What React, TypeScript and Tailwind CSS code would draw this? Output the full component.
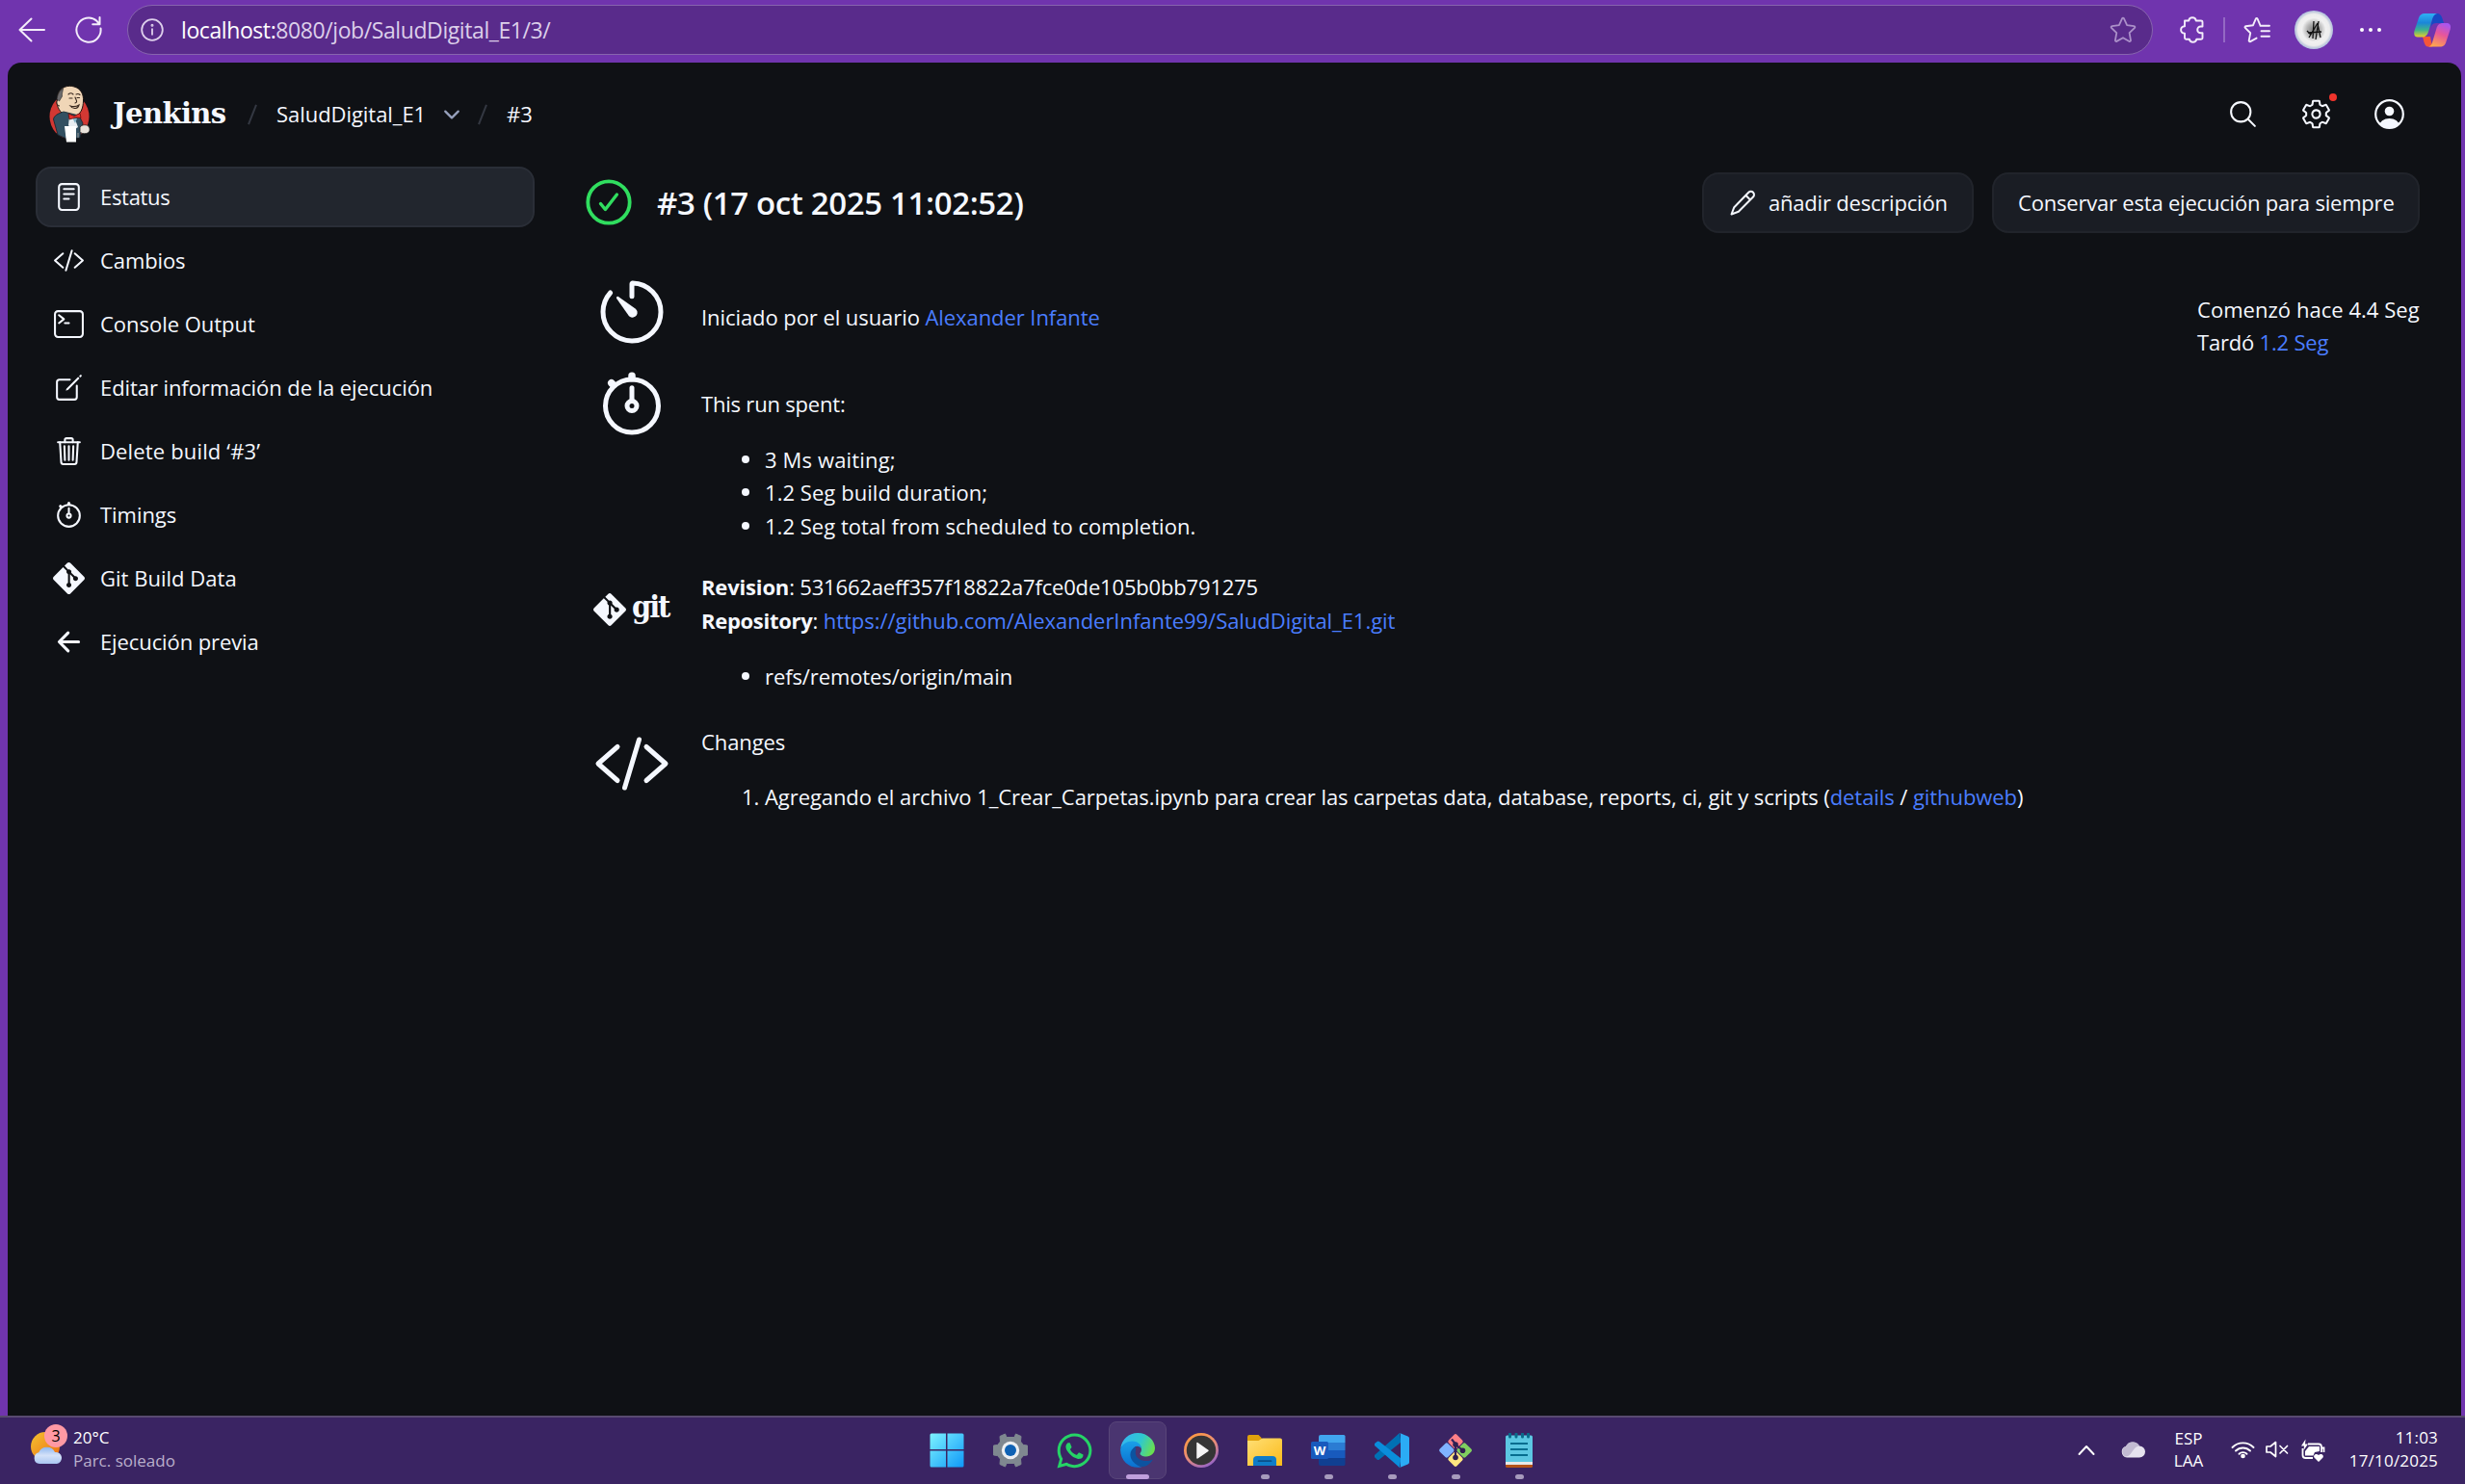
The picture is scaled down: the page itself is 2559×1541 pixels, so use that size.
import React from "react";
import {
  IoArrowBackOutline,
  IoChevronDownOutline,
  IoCodeSlashOutline,
  IoCreateOutline,
  IoReaderOutline,
  IoSearchOutline,
  IoSettingsOutline,
  IoStopwatchOutline,
  IoTerminalOutline,
  IoTimerOutline,
  IoTrashOutline,
} from "react-icons/io5";
import { SiGit } from "react-icons/si";
import { FaWhatsapp } from "react-icons/fa";

const PuzzleIcon = () => (
  <svg width="26" height="28" viewBox="0 0 26 28" fill="none" stroke="#f3ecfa" strokeWidth="1.9" strokeLinejoin="round">
    <path d="M5 4.500h4.200c.3-2 1.900-3.300 3.800-3.300s3.500 1.300 3.800 3.300h5.200a1.500 1.500 0 0 1 1.500 1.500v4.500h-1.900a3.300 3.300 0 0 0 0 6.800h1.900v5a1.500 1.500 0 0 1-1.500 1.500h-4.700c-.4 1.800-1.900 3-3.700 3s-3.300-1.200-3.700-3H6.500A1.500 1.500 0 0 1 5 22.300v-4.700c-2.200-.2-3.900-1.700-3.900-3.700S2.800 10.400 5 10.200z" />
  </svg>
);

const Star = () => (
  <svg width="28" height="28" viewBox="0 0 28 28" fill="none" stroke="#ab90c9" strokeWidth="1.8" strokeLinejoin="round">
    <path d="M13.100 2.200a1 1 0 0 1 1.800 0l3.200 6.900 7.400 1a1 1 0 0 1 .6 1.700l-5.500 5.300 1.400 7.800a1 1 0 0 1-1.500 1L14 22.200l-6.600 3.700a1 1 0 0 1-1.500-1l1.400-7.800L1.900 11.800a1 1 0 0 1 .6-1.700l7.400-1z" />
  </svg>
);

const FavList = () => (
  <svg width="28" height="28" viewBox="0 0 28 28" fill="none" stroke="#f3ecfa" strokeWidth="1.9" strokeLinejoin="round" strokeLinecap="round">
    <path d="M17.500 9.500 14.600 2.600a1 1 0 0 0-1.800 0L10 9.200l-7.700 1a1 1 0 0 0-.5 1.700l5.400 5.300-1.500 7.900a1 1 0 0 0 1.500 1l6.400-3.500M17.500 9.700H27M18.500 15.200H27M18.500 20.700H27" />
  </svg>
);

const Avatar = () => (
  <svg width="40" height="40" viewBox="0 0 40 40">
    <defs>
      <radialGradient id="av">
        <stop offset="0" stopColor="#777" />
        <stop offset=".35" stopColor="#b5b5b5" />
        <stop offset=".62" stopColor="#f1f1f1" />
        <stop offset=".82" stopColor="#ededed" />
        <stop offset=".92" stopColor="#c6cede" />
        <stop offset="1" stopColor="#b3c2e0" />
      </radialGradient>
    </defs>
    <circle cx="20" cy="20" r="20" fill="url(#av)" />
    <path d="M13 21l4 4M15 28l9-15M20 11l-1 18M25 11l-3 19M14 23l14-1M24 14l3 14" stroke="#111" strokeWidth="1.300" fill="none" />
  </svg>
);

const Copilot = () => (
  <svg width="38" height="36" viewBox="0 0 38 36">
    <defs>
      <linearGradient id="cp1" x1="0" y1="0" x2="0" y2="1">
        <stop offset="0" stopColor="#2fb0f5" />
        <stop offset=".4" stopColor="#1b86d8" />
        <stop offset=".7" stopColor="#3fb38c" />
        <stop offset="1" stopColor="#e8cf2a" />
      </linearGradient>
      <linearGradient id="cp2" x1=".7" y1="0" x2=".3" y2="1">
        <stop offset="0" stopColor="#a855f0" />
        <stop offset=".45" stopColor="#e8569a" />
        <stop offset="1" stopColor="#ffa64d" />
      </linearGradient>
    </defs>
    <path d="M20 1h4c3 0 4.500 2 5.400 5l1.600 5h-8c-4 0-5 3-6 6z" fill="#1848c4" />
    <path d="M9 25h8l2 10.500h-4c-2.500 0-3.800-2-4.600-5z" fill="#f4553a" />
    <path d="M11 1h13c-2.500.5-4 2.500-5 6l-4 13c-1 3.500-3 5.500-7 5.500H4C.5 25.500-.4 23 .5 19L5 5.500C6 2.500 8 1 11 1z" fill="url(#cp1)" />
    <path d="M27 35.500H15c2.500-.5 3.600-2.500 4.500-6l3.800-12.500c1-4 3-6 7-6h4c3.500 0 4.300 3 3.400 6.500L33.500 30c-1 4-3 5.500-6.500 5.500z" fill="url(#cp2)" />
  </svg>
);

const Butler = () => (
  <svg width="42" height="60" viewBox="0 0 42 60">
    <ellipse cx="21" cy="33" rx="20.500" ry="23" fill="#d33833" />
    <path d="M9 10C12 2 20 0 26 2c7 2 10 8 9.500 15-.3 7-2 12-7 15H18c-5-1-9-7-10-13z" fill="#f0d6b7" stroke="#1c1512" strokeWidth="1" />
    <path d="M8 15c1-6 3-9 6.500-11-.5 4-1.500 5-1 8l-3 5z" fill="#6d6b6d" stroke="#222" strokeWidth=".6" />
    <path d="M9 16c-2 1-1 6 2 6" fill="#f0d6b7" stroke="#1c1512" strokeWidth=".9" />
    <path d="M20 10c2-2 4-1 5 0M28 10c2-1 3-.5 4 .5M21 14h3M29 13.500h2.500M27 13c1 3 3 5 0 6M22 22c3 1 6 1 9-1-1 4-6 5-9 1z" fill="none" stroke="#3a2a20" strokeWidth="1.100" strokeLinecap="round" />
    <path d="M15 28c-6 2-10 4-10.500 8L9 52l9 4 14-1 3-15-4-8-8-2z" fill="#335061" stroke="#14222b" strokeWidth=".8" />
    <path d="M21 33l6 3 3 8-6 4-4-6z" fill="#e9eef2" />
    <path d="M24 34l3 6 2-5z" fill="#81b0c4" />
    <path d="M20 30l6 2.500 6-3 1 5-5-.5-7 2z" fill="#e8322d" stroke="#5b0f0d" strokeWidth=".8" />
    <path d="M16 43l12 0 0 16.500-10 0z" fill="#fff" />
    <path d="M32 44c2-3 8-3 9.500 0s0 6-3 6.500-6 0-6.500-2z" fill="#e9e2da" stroke="#222" strokeWidth=".8" />
    <path d="M30 50l0 5" stroke="#999" strokeWidth="1" />
  </svg>
);

const Slash = () => (
  <svg width="10" height="22" viewBox="0 0 10 22">
    <path d="M9 .8 1 21.200" stroke="#343842" strokeWidth="2" />
  </svg>
);

const PencilIcon = () => (
  <svg width="28" height="28" viewBox="0 0 28 28" fill="none" stroke="#f5f8ff" strokeWidth="2" strokeLinejoin="round" strokeLinecap="round">
    <path d="M20.300 2.800a3.300 3.300 0 0 1 4.700 4.700L9.800 22.700 2.500 25.500l2.800-7.300zM17.300 5.800l4.700 4.700" />
  </svg>
);

const UserIcon = () => (
  <svg width="31" height="31" viewBox="0 0 31 31">
    <clipPath id="uc"><circle cx="15.500" cy="15.500" r="14.500" /></clipPath>
    <circle cx="15.500" cy="15.500" r="14.300" fill="none" stroke="#f5f8ff" strokeWidth="2.200" />
    <circle cx="15.500" cy="12.500" r="4.800" fill="#f5f8ff" />
    <ellipse cx="15.500" cy="28" rx="10.500" ry="8" fill="#f5f8ff" clipPath="url(#uc)" />
  </svg>
);

const nav: { label: string; icon: React.ReactNode; cls: string }[] = [
  { label: "Estatus", icon: <IoReaderOutline size={33} />, cls: "tracking-[-0.3px]" },
  { label: "Cambios", icon: <IoCodeSlashOutline size={33} />, cls: "tracking-[-0.1px]" },
  { label: "Console Output", icon: <IoTerminalOutline size={33} />, cls: "tracking-[-0.03px]" },
  { label: "Editar información de la ejecución", icon: <IoCreateOutline size={33} />, cls: "tracking-[-0.08px]" },
  { label: "Delete build ‘#3’", icon: <IoTrashOutline size={33} />, cls: "tracking-[0.15px]" },
  { label: "Timings", icon: <IoStopwatchOutline size={33} />, cls: "tracking-[-0.05px]" },
  { label: "Git Build Data", icon: <SiGit size={33} />, cls: "tracking-[0.02px]" },
  { label: "Ejecución previa", icon: <IoArrowBackOutline size={33} />, cls: "tracking-[-0.1px]" },
];

function BrowserBar() {
  return (
    <div className="flex h-[65px] shrink-0 items-start">
      <div className="flex h-[61px] items-center pl-[19px]">
        <svg width="28" height="26" viewBox="0 0 28 26" fill="none" stroke="#f3ecfa" strokeWidth="2" strokeLinecap="round" strokeLinejoin="round">
          <path d="M27 13H1.500M13.500 1.500 1.500 13l12 11.500" />
        </svg>
        <svg className="ml-[31px]" width="28" height="28" viewBox="0 0 28 28" fill="none" stroke="#f3ecfa" strokeWidth="2" strokeLinecap="round" strokeLinejoin="round">
          <path d="M26.500 12.500A12.600 12.600 0 1 1 22.500 4.800l2.700 3.200M25.500 1v7.300h-7.300" />
        </svg>
      </div>
      <div className="ml-[26px] mt-[5px] flex h-[52px] w-[2103px] items-center rounded-full border-[1.500px] border-[#8764ae] bg-[#592b8b] pl-[13px] pr-[16px]">
        <svg width="24" height="24" viewBox="0 0 24 24" fill="none" stroke="#ded0ec" strokeWidth="1.800">
          <circle cx="12" cy="12" r="10.800" />
          <path d="M12 10.500v7" />
          <circle cx="12" cy="7.300" r=".6" />
        </svg>
        <span className="ml-[18px] text-[23px] leading-[34px] tracking-[-0.41px] text-[#dccfea]">
          <span className="text-white">localhost:</span>8080/job/SaludDigital_E1/3/
        </span>
        <span className="ml-auto"><Star /></span>
      </div>
      <div className="flex h-[62px] items-center pl-[28px]">
        <PuzzleIcon />
        <div className="ml-[19px] h-[26px] w-[2px] bg-[#9468c4]" />
        <div className="ml-[19px]"><FavList /></div>
        <div className="ml-[25px]"><Avatar /></div>
        <div className="ml-[28px] flex gap-[5px]">
          <i className="size-[4px] rounded-full bg-white" />
          <i className="size-[4px] rounded-full bg-white" />
          <i className="size-[4px] rounded-full bg-white" />
        </div>
        <div className="ml-[34px]"><Copilot /></div>
      </div>
    </div>
  );
}

function Header() {
  return (
    <div className="flex h-[108px] items-center pb-[2px] pl-[43px] pr-[59px]">
      <Butler />
      <span className="ml-[24px] w-[120px] whitespace-nowrap font-['DejaVu_Serif'] text-[29px] font-bold leading-[36px] tracking-[-0.6px]">Jenkins</span>
      <div className="ml-[20px] flex items-center pt-px">
        <Slash />
        <span className="ml-[20px] w-[155px] whitespace-nowrap tracking-[-0.05px]">SaludDigital_E1</span>
        <IoChevronDownOutline size={24} className="ml-[15px] text-[#97a1bd]" />
        <span className="ml-[15px]"><Slash /></span>
        <span className="ml-[20px]">#3</span>
      </div>
      <div className="ml-auto flex items-center">
        <IoSearchOutline size={33} className="mr-[43px]" />
        <div className="relative mr-[44px]">
          <IoSettingsOutline size={33} />
          <i className="absolute -top-[5px] left-[30px] size-[8px] rounded-full bg-[#f0342c]" />
        </div>
        <UserIcon />
      </div>
    </div>
  );
}

function Sidebar() {
  return (
    <div className="flex w-[518px] shrink-0 flex-col gap-[3px]">
      {nav.map((n, i) => (
        <div
          key={n.label}
          className={
            "flex h-[63px] items-center rounded-[16px] border-2 pl-[16px] " +
            (i === 0 ? "border-[#2a2e37] bg-[#22262e]" : "border-transparent")
          }
        >
          {n.icon}
          <span className={"ml-[16px] " + n.cls}>{n.label}</span>
        </div>
      ))}
    </div>
  );
}

const Row = ({ icon, children, className }: { icon: React.ReactNode; children: React.ReactNode; className: string }) => (
  <div className={"flex items-start " + className}>
    <div className="flex w-[120px] shrink-0 items-center pl-[8px]">{icon}</div>
    <div className="whitespace-nowrap">{children}</div>
  </div>
);

const Bullet = ({ children, mark }: { children: React.ReactNode; mark?: string }) => (
  <div className="flex items-center pl-[42px]">
    {mark ? <span className="w-[24px]">{mark}</span> : <i className="mr-[16px] size-[8px] rounded-full bg-[#f5f8ff]" />}
    <span>{children}</span>
  </div>
);

function Main() {
  return (
    <div className="ml-[53px] flex w-[1904px] flex-col">
      <div className="mt-[6px] flex h-[63px] items-center">
        <svg width="48" height="48" viewBox="0 0 48 48" fill="none" stroke="#30de5f" strokeWidth="3.800" strokeLinecap="round" strokeLinejoin="round" className="-mt-[1px]">
          <circle cx="24" cy="24" r="21.700" />
          <path d="M15.500 25.500l4.900 6 12-15.500" strokeWidth="3.400" />
        </svg>
        <h1 className="ml-[26px] text-[33px] font-semibold leading-[44px] tracking-[-0.36px]">#3 (17 oct 2025 11:02:52)</h1>
        <div className="ml-auto flex h-[63px] w-[282px] items-center rounded-[17px] border-2 border-[#21242b] bg-[#1a1d24] pl-[26px]">
          <PencilIcon />
          <span className="ml-[13px] whitespace-nowrap tracking-[-0.2px]">añadir descripción</span>
        </div>
        <div className="ml-[19px] flex h-[63px] w-[444px] items-center rounded-[17px] border-2 border-[#21242b] bg-[#1a1d24] pl-[25px]">
          <span className="whitespace-nowrap tracking-[-0.2px]">Conservar esta ejecución para siempre</span>
        </div>
      </div>
      <div className="flex justify-between">
        <div className="flex flex-col pt-[42px]">
          <Row className="h-[95px]" icon={<IoTimerOutline size={80} />}>
            <div className="pt-[28px] tracking-[-0.07px]">
              Iniciado por el usuario <span className="text-[#4a7dff]">Alexander Infante</span>
            </div>
          </Row>
          <Row className="h-[213px]" icon={<IoStopwatchOutline size={80} />}>
            <div className="pt-[23px] tracking-[-0.2px]">This run spent:</div>
            <div className="pt-[23px]">
              <Bullet><span className="tracking-[0.15px]">3 Ms waiting;</span></Bullet>
              <Bullet><span className="tracking-[0.05px]">1.2 Seg build duration;</span></Bullet>
              <Bullet><span className="tracking-[0.03px]">1.2 Seg total from scheduled to completion.</span></Bullet>
            </div>
          </Row>
          <Row
            className="h-[161px]"
            icon={
              <div className="flex items-center pt-[24px]">
                <SiGit size={34} />
                <span className="ml-[6px] -mt-[7px] font-['DejaVu_Serif'] text-[32px] font-bold leading-[34px] tracking-[-2px] [font-stretch:condensed]">git</span>
              </div>
            }
          >
            <div className="tracking-[-0.17px]"><b>Revision</b>: 531662aeff357f18822a7fce0de105b0bb791275</div>
            <div className="tracking-[-0.04px]">
              <b className="tracking-[-0.3px]">Repository</b>: <span className="text-[#4a7dff]">https://github.com/AlexanderInfante99/SaludDigital_E1.git</span>
            </div>
            <div className="pt-[24px] tracking-[-0.1px]"><Bullet>refs/remotes/origin/main</Bullet></div>
          </Row>
          <Row className="" icon={<IoCodeSlashOutline size={80} />}>
            <div className="tracking-[-0.1px]">Changes</div>
            <div className="pt-[22px] tracking-[-0.07px]">
              <Bullet mark="1.">
                Agregando el archivo 1_Crear_Carpetas.ipynb para crear las carpetas data, database, reports, ci, git y scripts (
                <span className="text-[#4a7dff]">details</span> / <span className="text-[#4a7dff]">githubweb</span>)
              </Bullet>
            </div>
          </Row>
        </div>
        <div className="w-[231px] whitespace-nowrap pt-[62px]">
          <div className="tracking-[0.04px]">Comenzó hace 4.4 Seg</div>
          <div className="-mt-px tracking-[-0.2px]">Tardó <span className="text-[#4a7dff]">1.2 Seg</span></div>
        </div>
      </div>
    </div>
  );
}

const WindowsLogo = () => (
  <svg width="36" height="36" viewBox="0 0 36 36">
    <defs>
      <linearGradient id="w1" x1="0" y1="0" x2="1" y2="1">
        <stop offset="0" stopColor="#7df3ff" />
        <stop offset="1" stopColor="#0f98f8" />
      </linearGradient>
    </defs>
    <path fill="url(#w1)" d="M2 .5h15v16.500H.5V2A1.500 1.500 0 0 1 2 .5zM18.500.5H34A1.500 1.500 0 0 1 35.500 2v15h-17zM.5 18.500H17v17H2A1.500 1.500 0 0 1 .5 34zM18.500 18.500h17V34a1.500 1.500 0 0 1-1.500 1.500H18.500z" />
  </svg>
);

const SettingsApp = () => (
  <svg width="36" height="36" viewBox="0 0 36 36">
    <path d="M12.500 1 14 4.500h8L23.500 1l5.500 2.500-.5 5.500 3 3.500 4 .5a16 16 0 0 1 0 10l-4 .5-3 3.500.5 5.500-5.500 2.500L22 31.500h-8L12.500 35 7 32.500l.5-5.500-3-3.500-4-.5a16 16 0 0 1 0-10l4-.5 3-3.500L7 3.500z" fill="#7f8890" stroke="#7f8890" strokeLinejoin="round" />
    <circle cx="18" cy="18" r="9.200" fill="#eceff2" />
    <circle cx="18" cy="18" r="6" fill="#0f62b4" />
  </svg>
);

const EdgeApp = () => (
  <svg width="36" height="36" viewBox="0 0 36 36">
    <defs>
      <linearGradient id="e1" x1="0" y1=".3" x2="1" y2=".6">
        <stop offset="0" stopColor="#35b5f1" />
        <stop offset=".55" stopColor="#2fc8cf" />
        <stop offset="1" stopColor="#6be04c" />
      </linearGradient>
      <linearGradient id="e2" x1="0" y1="0" x2="0" y2="1">
        <stop offset="0" stopColor="#1aa0e8" />
        <stop offset="1" stopColor="#0a6fd0" />
      </linearGradient>
    </defs>
    <path d="M.3 16C1.500 6.500 9 0 18 0c10.500 0 18 8 18 15.500 0 5.500-4 9-9 9-4 0-6.500-1.500-6.500-3 0-1 1.500-1.500 1.500-4.500 0-4-4-7-8.500-7C7.500 10 2 12.500.3 16z" fill="url(#e1)" />
    <path d="M.1 17C1.500 11.500 7 8.500 12.500 8.500c5 0 9.500 3.500 9.500 8-1.500-3-5-3.500-7-2-3.500 3-4 9-1 14 2 3.500 5 6 8.500 6.800C12 38 0 30.500.1 17z" fill="url(#e2)" />
    <path d="M16 14.200c-6 2.500-7.500 9.800-3 15.300 4.500 6 12.500 7 16.500 3 2-1.500 3.500-3.500 4.300-5-7 3.500-17.500 1-18-6.500-.1-3 .7-5.300.2-6.800z" fill="#0c53a0" />
  </svg>
);

const MediaApp = () => (
  <svg width="36" height="36" viewBox="0 0 36 36">
    <defs>
      <linearGradient id="m1" x1=".2" y1="0" x2=".8" y2="1">
        <stop offset="0" stopColor="#ff9a3d" />
        <stop offset=".5" stopColor="#e98d78" />
        <stop offset="1" stopColor="#8a5fd0" />
      </linearGradient>
    </defs>
    <circle cx="18" cy="18" r="18" fill="url(#m1)" />
    <circle cx="18" cy="18" r="15.200" fill="#353535" />
    <path d="M14 10.500v15.500L25 18.300z" fill="#f5f5f5" stroke="#f5f5f5" strokeWidth="1.500" strokeLinejoin="round" />
  </svg>
);

const FolderApp = () => (
  <svg width="36" height="36" viewBox="0 0 36 36">
    <defs>
      <linearGradient id="f1" x1="0" y1="0" x2="1" y2="1">
        <stop offset="0" stopColor="#ffdf76" />
        <stop offset="1" stopColor="#fbbb1a" />
      </linearGradient>
    </defs>
    <path d="M0 4a2 2 0 0 1 2-2h9.500L15 5.500V12H0z" fill="#e0a10c" />
    <path d="M0 8h11.500l4-2.500H34a2 2 0 0 1 2 2V34H0z" fill="url(#f1)" />
    <path d="M6 34v-6a4 4 0 0 1 4-4h16a4 4 0 0 1 4 4v6z" fill="#0f7cc8" />
    <path d="M11.500 29.200h13" stroke="#0a4f88" strokeWidth="1.800" strokeLinecap="round" />
  </svg>
);

const WordApp = () => (
  <div className="relative h-[36px] w-[36px]">
    <svg width="36" height="36" viewBox="0 0 36 36">
      <path d="M8 10V4a2 2 0 0 1 2-2h24a1.500 1.500 0 0 1 1.500 1.500V10z" fill="#41a5ee" />
      <path d="M8 10h27.500v8H8z" fill="#2b7cd3" />
      <path d="M8 18h27.500v8H8z" fill="#185abd" />
      <path d="M8 26h27.500v6.500A1.500 1.500 0 0 1 34 34H10a2 2 0 0 1-2-2z" fill="#103f91" />
      <rect x="0" y="9" width="18" height="18" rx="1.500" fill="#185abd" />
    </svg>
    <span className="absolute left-0 top-[9px] w-[18px] text-center text-[13px] font-bold leading-[18px] text-white">W</span>
  </div>
);

const CodeApp = () => (
  <svg width="36" height="36" viewBox="0 0 36 36">
    <path d="M.5 22.500 26 0l1.500 9.500L5 27.500a2 2 0 0 1-2.500 0L.7 25.800a2 2 0 0 1-.2-3.300z" fill="#0070b4" />
    <path d="M.5 13.500 26 36l1.500-9.500L5 9a2 2 0 0 0-2.500 0L.7 10.500a2 2 0 0 0-.2 3z" fill="#0a8ddb" />
    <path d="M26 0l8.500 3.500A2.500 2.500 0 0 1 36 6v24a2.500 2.500 0 0 1-1.500 2.500L26 36c1-.5 1-1.500 1-2.500V3c0-1.200 0-2.500-1-3z" fill="#2bacf5" />
  </svg>
);

const GitBashApp = () => (
  <svg width="36" height="36" viewBox="0 0 36 36">
    <g transform="rotate(45 18 18)">
      <rect x="5.500" y="5.500" width="12" height="12" rx="2" fill="#ff7f86" />
      <rect x="18.500" y="5.500" width="12" height="12" rx="2" fill="#80d05f" />
      <rect x="5.500" y="18.500" width="12" height="12" rx="2" fill="#80b3ff" />
      <rect x="18.500" y="18.500" width="12" height="12" rx="2" fill="#ffe680" />
    </g>
    <path d="M14 6.500l4 5v14M18 12l7.500 6" stroke="#34225a" strokeWidth="2.200" fill="none" />
    <circle cx="18" cy="12" r="2.800" fill="#2f2050" />
    <circle cx="25.500" cy="18.200" r="2.800" fill="#2f2050" />
    <circle cx="18" cy="25.500" r="2.800" fill="#2f2050" />
  </svg>
);

const NotepadApp = () => (
  <svg width="36" height="36" viewBox="0 0 36 36">
    <path d="M4 30h28v4.500a1.500 1.500 0 0 1-1.500 1.500h-25A1.500 1.500 0 0 1 4 34.500z" fill="#b45318" />
    <path d="M4 29h28v4H4z" fill="#e8e8e8" />
    <path d="M4 4a1.500 1.500 0 0 1 1.500-1.500h25A1.500 1.500 0 0 1 32 4v26H4z" fill="#5cc7e2" />
    <path d="M9 11h18M9 17h18M9 23h18" stroke="#066d8f" strokeWidth="1.800" />
    <path d="M8.500 1v3M15 1v3M21.500 1v3M27.500 1v3" stroke="#0a6c8c" strokeWidth="3" strokeLinecap="round" />
  </svg>
);

const apps: { icon: React.ReactNode; run?: boolean; active?: boolean }[] = [
  { icon: <WindowsLogo /> },
  { icon: <SettingsApp /> },
  { icon: <FaWhatsapp size={41} color="#25d366" /> },
  { icon: <EdgeApp />, active: true },
  { icon: <MediaApp /> },
  { icon: <FolderApp />, run: true },
  { icon: <WordApp />, run: true },
  { icon: <CodeApp />, run: true },
  { icon: <GitBashApp />, run: true },
  { icon: <NotepadApp />, run: true },
];

function Taskbar() {
  return (
    <div className="flex h-[71px] shrink-0 border-t-2 border-[#584a70] bg-[#3a2463]">
      <div className="flex w-[950px] items-start pl-[32px]">
        <div className="relative mt-[6px] h-[48px] w-[44px]">
          <svg width="34" height="38" viewBox="0 0 34 38" className="mt-[5px]">
            <defs>
              <linearGradient id="sun" x1="0" y1="0" x2="1" y2="1">
                <stop offset="0" stopColor="#f3c330" />
                <stop offset="1" stopColor="#ee6a12" />
              </linearGradient>
              <linearGradient id="cl" x1="0" y1="0" x2="0" y2="1">
                <stop offset="0" stopColor="#8db6ef" />
                <stop offset=".5" stopColor="#d5e2f8" />
                <stop offset="1" stopColor="#a9c6f2" />
              </linearGradient>
            </defs>
            <circle cx="15" cy="19" r="15" fill="url(#sun)" />
            <path d="M9 37a6 6 0 0 1-.8-11.800A9 8.500 0 0 1 25 25a6 6 0 0 1 2 12z" fill="url(#cl)" />
          </svg>
          <span className="absolute left-[14px] top-[1px] size-[24px] rounded-full bg-[#ff99a4] text-center text-[16px] leading-[24px] text-black">3</span>
        </div>
        <div className="pt-[9px] text-[17px] leading-[24px]">
          <div className="text-white">20°C</div>
          <div className="text-[#b9afcb]">Parc. soleado</div>
        </div>
      </div>
      <div className="flex">
        {apps.map((a, i) => (
          <div key={i} className="flex w-[66px] justify-center pt-[4px]">
            <div
              className={
                "relative flex h-[60px] w-[60px] items-center justify-center rounded-[8px] " +
                (a.active ? "border border-[#584578] bg-[#4a3570]" : "")
              }
            >
              {a.icon}
              {a.active && <i className="absolute -bottom-px left-[17px] h-[5px] w-[24px] rounded-full bg-[#bf9fdc]" />}
              {a.run && <i className="absolute bottom-0 left-[26px] h-[5px] w-[9px] rounded-full bg-[#a79bbd]" />}
            </div>
          </div>
        ))}
      </div>
      <div className="ml-auto flex items-start pr-[28px] text-[17px] leading-[24px] text-white">
        <svg className="mt-[28px]" width="18" height="12" viewBox="0 0 18 12" fill="none" stroke="#fff" strokeWidth="2" strokeLinecap="round" strokeLinejoin="round">
          <path d="M1.500 10 9 2l7.500 8" />
        </svg>
        <svg className="ml-[27px] mt-[24px]" width="25" height="18" viewBox="0 0 25 18">
          <path d="M6 17.500A6 6 0 0 1 5 5.800 8 8 0 0 1 19 5.500a6 6 0 0 1 0 12z" fill="#e6e3ef" />
          <path d="M5 5.800A8 8 0 0 1 19 5.500c-4 0-6 4-9 8-1.500 2-3 3-5.500 3A6 6 0 0 1 5 5.800z" fill="#c2bbd2" />
        </svg>
        <div className="ml-[28px] mt-[10px] w-[34px] text-center leading-[23px]">
          <div>ESP</div>
          <div>LAA</div>
        </div>
        <svg className="ml-[27px] mt-[24px]" width="25" height="19" viewBox="0 0 25 19" fill="none" stroke="#fff" strokeWidth="1.900" strokeLinecap="round">
          <path d="M1.500 7a15.500 15.500 0 0 1 22 0M5 10.500a10.700 10.700 0 0 1 15 0M8.500 13.800a5.700 5.700 0 0 1 8 0" />
          <circle cx="12.500" cy="16" r="1.400" fill="#fff" />
        </svg>
        <svg className="ml-[11px] mt-[24px]" width="24" height="18" viewBox="0 0 24 18" fill="none" stroke="#fff" strokeWidth="1.700" strokeLinecap="round" strokeLinejoin="round">
          <path d="M1 6v6h4l5.500 4.500v-15L5 6zM15 5.500l7.500 7.500M22.500 5.500 15 13" />
        </svg>
        <svg className="ml-[12px] mt-[22px]" width="26" height="25" viewBox="0 0 26 25">
          <path d="M8 5.500h11a3 3 0 0 1 3 3V14M2.500 10v7a3 3 0 0 0 3 3H13M22 9.500h2.500V14" fill="none" stroke="#fff" strokeWidth="1.800" />
          <path d="M9 8h11v5l-5 1-1.500 3.500H5V13z" fill="#fff" />
          <path d="M5.500.5 1 7.500h3L3.500 12 8 5.500H5z" fill="#fff" />
          <path d="M19 24l-4.500-4.500c-1.500-2.500 2-5 4.500-2.500 2.500-2.500 6 0 4.500 2.500z" fill="#fff" />
        </svg>
        <div className="ml-[21px] w-[96px] whitespace-nowrap pt-[9px] text-right tracking-[0.2px]">
          <div>11:03</div>
          <div>17/10/2025</div>
        </div>
      </div>
    </div>
  );
}

export default function App() {
  return (
    <div className="flex h-[1541px] w-[2559px] flex-col overflow-hidden bg-[#7034ae] font-['Open_Sans','Noto_Sans',sans-serif]">
      <BrowserBar />
      <div className="ml-[8px] flex h-[1405px] w-[2547px] flex-col rounded-t-[14px] bg-[#0f1115] text-[22px] leading-[34.500px] text-[#f5f8ff]">
        <Header />
        <div className="flex pl-[29px]">
          <Sidebar />
          <Main />
        </div>
      </div>
      <Taskbar />
    </div>
  );
}
